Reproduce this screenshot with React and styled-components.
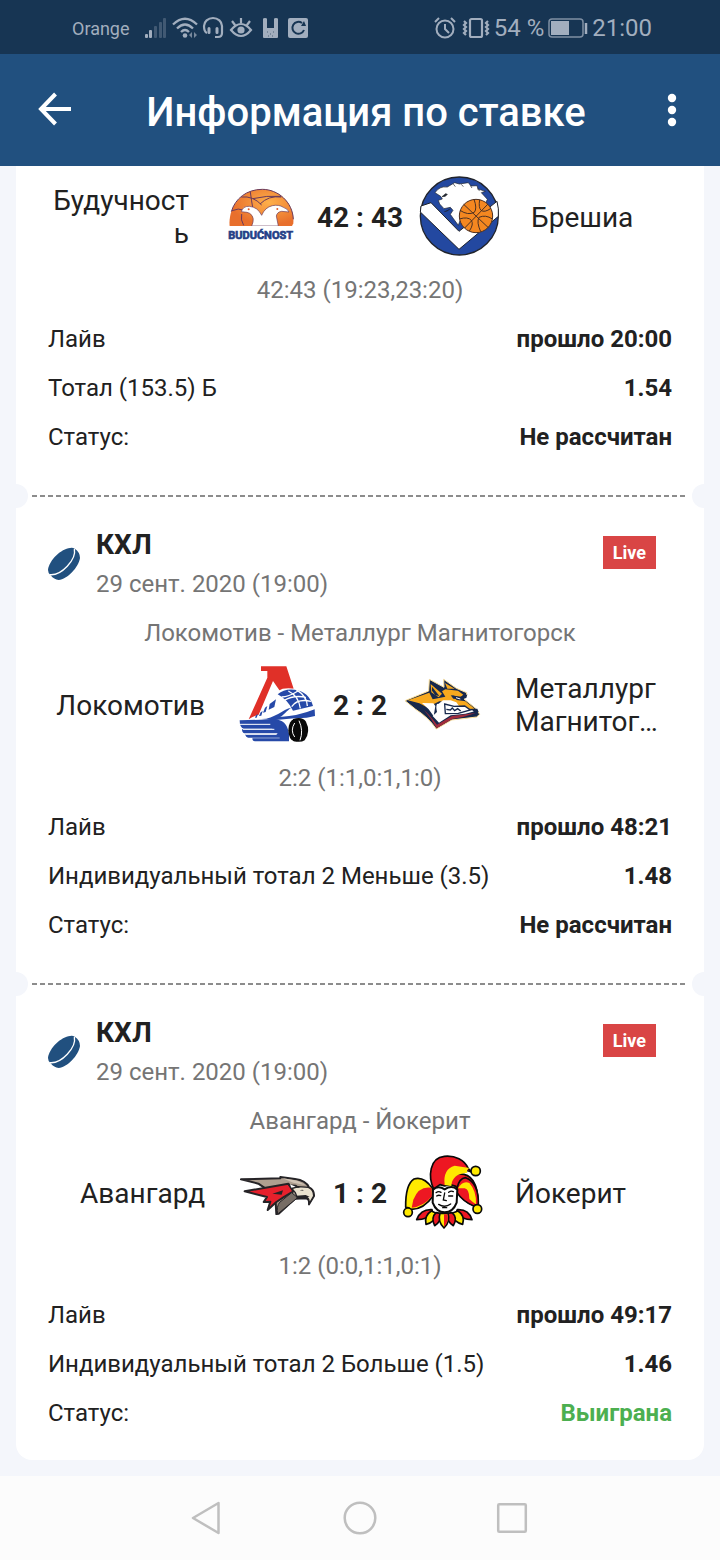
import React from "react";
import styled, { createGlobalStyle } from "styled-components";

const GlobalStyle = createGlobalStyle`
  * { box-sizing: border-box; }
  body {
    margin: 0;
    background: #f4f6fb;
    color: #212121;
    font-family: Roboto, "Noto Sans", sans-serif;
    font-size: 24px;
  }
  button { font: inherit; color: inherit; border: 0; padding: 0; background: none; cursor: pointer; }
  svg { display: block; flex: none; overflow: visible; }
`;

const Screen = styled.div`
  display: flex;
  flex-direction: column;
  min-height: 100vh;
`;

const StatusBar = styled.div`
  display: flex;
  justify-content: space-between;
  align-items: center;
  height: 54px;
  padding: 2px 68px 0 72px;
  background: #173553;
  color: #a2aebe;
`;

const StatusGroup = styled.div`
  display: flex;
  align-items: center;
  gap: ${(p) => p.$gap}px;
  white-space: pre;
`;

const Carrier = styled.span`
  font-size: 18px;
  margin-right: 10px;
`;

const AppBar = styled.header`
  display: flex;
  align-items: center;
  height: 112px;
  padding: 0 28px 0 32px;
  background: #21507f;
  color: #fff;
`;

const BarButton = styled.button`
  display: flex;
  justify-content: center;
  align-items: center;
  width: ${(p) => p.$width}px;
  height: 48px;
`;

const Title = styled.h1`
  flex: 1;
  margin: 0;
  padding-top: 6px;
  font-size: 40px;
  line-height: 48px;
  font-weight: 500;
  text-align: center;
`;

const Ticket = styled.main`
  flex: 1;
  margin: 0 16px 16px;
  background: #fff;
  border-radius: 0 0 16px 16px;
`;

const Bet = styled.section`
  padding: ${(p) => (p.$continued ? 3 : 0)}px 32px 23px;
`;

const Perforation = styled.div`
  display: flex;
  align-items: center;
  justify-content: space-between;
  gap: 4px;
  height: 24px;
`;

const Notch = styled.span`
  width: 12px;
  height: 24px;
  background: #f4f6fb;
  border-radius: ${(p) => (p.$right ? "12px 0 0 12px" : "0 12px 12px 0")};
`;

const Dashes = styled.span`
  flex: 1;
  height: 2px;
  background: repeating-linear-gradient(90deg, #8c8c8c 0 5px, transparent 5px 8px);
`;

const BetHeader = styled.div`
  display: flex;
  align-items: flex-start;
  gap: 16px;
  height: 100px;
  padding: 20px 16px 0 0;
`;

const SportIcon = styled.div`
  padding-top: 20px;
`;

const League = styled.div`
  flex: 1;
`;

const LeagueName = styled.h2`
  margin: 0;
  font-size: 28px;
  line-height: 34px;
  font-weight: 700;
`;

const MatchDate = styled.div`
  line-height: 44px;
  color: #757575;
`;

const LiveBadge = styled.span`
  margin-top: 8px;
  padding: 1px 10px 0;
  background: #d94545;
  color: #fff;
  font-size: 18px;
  line-height: 32px;
  font-weight: 700;
`;

const Caption = styled.div`
  padding-top: 2px;
  line-height: 47px;
  text-align: center;
  color: #757575;
`;

const Teams = styled.div`
  display: grid;
  grid-template-columns: minmax(0, 1fr) auto minmax(0, 1fr);
  align-items: center;
  gap: 32px;
  height: 96px;
`;

const TeamName = styled.div`
  display: -webkit-box;
  -webkit-box-orient: vertical;
  -webkit-line-clamp: 2;
  overflow: hidden;
  overflow-wrap: anywhere;
  font-size: 28px;
  line-height: 33px;
  text-align: ${(p) => (p.$home ? "right" : "left")};
`;

const ScoreBoard = styled.div`
  display: flex;
  align-items: center;
  gap: 16px;
`;

const Score = styled.strong`
  font-size: 28px;
  line-height: 33px;
  font-weight: 700;
`;

const Details = styled.dl`
  margin: 0;
`;

const Detail = styled.div`
  display: flex;
  justify-content: space-between;
  padding-top: 2px;
  line-height: 47px;
`;

const Term = styled.dt``;

const Value = styled.dd`
  margin: 0;
  font-weight: 700;
  color: ${(p) => (p.$won ? "#4caf50" : "inherit")};
`;

const NavBar = styled.nav`
  display: flex;
  justify-content: center;
  align-items: center;
  gap: 104px;
  height: 84px;
  background: #fcfcfc;
`;

const NavButton = styled.button`
  display: flex;
  justify-content: center;
  align-items: center;
  width: 48px;
  height: 48px;
`;

const SignalIcon = () => (
  <svg width="22" height="22" viewBox="0 0 22 22" fill="currentColor">
    <rect x="0" y="17" width="3" height="4" rx="1" />
    <rect x="4" y="13" width="3" height="8" rx="1" />
    <g opacity=".3">
      <rect x="9" y="9" width="3" height="12" rx="1" />
      <rect x="14" y="5" width="3" height="16" rx="1" />
      <rect x="18" y="1" width="3" height="20" rx="1" />
    </g>
  </svg>
);

const WifiIcon = () => (
  <svg width="26" height="22" viewBox="0 0 26 22" fill="none" stroke="currentColor" strokeWidth="2.3">
    <path d="M1 7.5Q13-4 25 7.5M5 11.5q8-8 16 0M9 15q4-4 8 0" />
    <circle cx="13" cy="18.5" r="2.3" fill="currentColor" stroke="none" />
    <path d="M20 15v6l-3-3zM22 15v6l3-3z" fill="currentColor" stroke="none" opacity=".7" />
  </svg>
);

const HeadsetIcon = () => (
  <svg width="22" height="22" viewBox="0 0 22 22" fill="none" stroke="currentColor" strokeWidth="2.2">
    <path d="M4 16C1 15 1 12 1 9a9 8 0 0 1 18 0v7q0 4-4 4h-3" />
    <path d="M6 11.500v4M14 11.500v4" strokeWidth="3" strokeLinecap="round" />
  </svg>
);

const EyeIcon = () => (
  <svg width="28" height="22" viewBox="0 0 28 22" fill="none" stroke="currentColor" strokeWidth="2.200">
    <path d="M1 13Q11 1 21 13 11 25 1 13zM11 1v5M2 4l3 4M20 4l-3 4" />
    <circle cx="11" cy="13" r="3.600" fill="currentColor" stroke="none" />
  </svg>
);

const BunnyIcon = () => (
  <svg width="20" height="22" viewBox="0 0 20 22">
    <path d="M0 2q0-1 2-1t2 1v9h7V2q0-1 2-1t2 1v18q0 1-1 1H1q-1 0-1-1z" fill="currentColor" />
    <path d="M4 15h1M10 15h1M7 17h1M5 19h1M9 19h1" stroke="#4d6279" strokeWidth="1" />
  </svg>
);

const SyncIcon = () => (
  <svg width="20" height="22" viewBox="0 0 20 22" fill="none" stroke="#173553" strokeWidth="2">
    <rect y="1" width="20" height="20" rx="2" fill="currentColor" stroke="none" />
    <path d="M16 13a6 6 0 1 1-2-7" />
    <path d="M13 9l5 0-2-5z" fill="#173553" stroke="none" />
  </svg>
);

const AlarmIcon = () => (
  <svg width="24" height="22" viewBox="0 0 24 22" fill="none" stroke="currentColor" strokeWidth="2">
    <circle cx="11" cy="12" r="8.500" />
    <path d="M11 7v5l4 4M1 5l4-4M21 5l-4-4" />
  </svg>
);

const VibrateIcon = () => (
  <svg width="28" height="22" viewBox="0 0 28 22" fill="none" stroke="currentColor" strokeWidth="2.200">
    <rect x="8" y="2" width="12" height="18" rx="1.500" />
    <path d="M2 4l2 2-2 2 2 2-2 2 2 2-2 2 2 2M26 4l-2 2 2 2-2 2 2 2-2 2 2 2-2 2" />
  </svg>
);

const BatteryIcon = () => (
  <svg width="40" height="20" viewBox="0 0 40 20" fill="none" stroke="currentColor">
    <rect x="1" y="1" width="34" height="18" rx="3" opacity=".75" strokeWidth="1.500" />
    <rect x="3" y="3" width="18" height="14" fill="currentColor" stroke="none" />
    <path d="M38 5v11" strokeWidth="2.500" />
  </svg>
);

const BackIcon = () => (
  <svg width="34" height="34" viewBox="1 1 34 34" fill="none" stroke="#fff" strokeWidth="4">
    <path d="M17.500 2L3 17l14.500 15M3.500 17H33" />
  </svg>
);

const MoreIcon = () => (
  <svg width="10" height="34" viewBox="0 0 10 34" fill="#fff">
    <circle cx="5" cy="5" r="4.200" />
    <circle cx="5" cy="17" r="4.200" />
    <circle cx="5" cy="29" r="4.200" />
  </svg>
);

const PuckIcon = () => (
  <svg width="32" height="32" viewBox="0 0 96 96" role="img" aria-label="Хоккей">
    <path d="M80 2Q96 12 96 30C92 58 58 94 32 96Q18 95 8 82Q0 76 0 66C4 36 40 2 66 0Q74-2 80 2z" fill="#21507f" />
    <path d="M79 3C86 34 40 84 5 80" fill="none" stroke="#fff" strokeWidth="4" />
  </svg>
);

const BuducnostLogo = () => (
  <svg width="80" height="80" viewBox="18 21 240 240" role="img" aria-label="Будучност">
    <defs>
      <radialGradient id="ballGlow" cx=".62" cy=".35" r=".6">
        <stop offset="0" stopColor="#ffb04a" />
        <stop offset="1" stopColor="#e86f2c" />
      </radialGradient>
    </defs>
    <path d="M44 170C38 110 82 57 142 58C198 59 239 105 235 160L230 170z" fill="url(#ballGlow)" />
    <g fill="none" stroke="#69395b" strokeWidth="3">
      <path d="M49 125C60 86 95 58 142 58s91 38 93 90" />
      <path d="M79 81q35-4 61 24M106 66q4 30 7 46M113 86q42-10 85-7M135 102q26-26 64-21M51 122q19-9 37-1M80 132q-4 18 6 34" />
    </g>
    <path d="M79 125Q84 108 103 109Q128 111 140 136Q150 112 172 107Q192 103 205 112Q218 116 222 126L200 124Q186 126 184 138L190 168H110Q122 142 104 130L96 127z" fill="#fff" stroke="#69395b" strokeWidth="2" />
    <circle cx="101" cy="118" r="3" fill="#e15a28" />
    <circle cx="187" cy="117" r="3" fill="#e15a28" />
    <rect x="38" y="168" width="198" height="44" fill="#fff" />
    <text x="137" y="207" textAnchor="middle" fontFamily="'Liberation Sans Narrow', Roboto, sans-serif" fontSize="33" fontWeight="700" fill="#243f87" stroke="#243f87" strokeWidth="2">BUDUĆNOST</text>
  </svg>
);

const BresciaLogo = () => (
  <svg width="80" height="80" viewBox="27 21 240 240" role="img" aria-label="Брешиа">
    <circle cx="148" cy="138" r="117" fill="#2348a0" stroke="#20232b" strokeWidth="4" />
    <path d="M33 108l30-10 84 86 114-90q6 22 4 45L147 238 31 126z" fill="#fff" stroke="#20232b" strokeWidth="3" />
    <path d="M75 68q13-20 37-17l22-13 14 4 27-4 8 10 18-1 3 10 22 7-12 4 18 20-8 18-60 20-4 36-10-10-5 14-14-19-10-14 8-12-8-9-19 4-13-14-4-11 12-4-5-8z" fill="#fff" stroke="#20232b" strokeWidth="2" />
    <path d="M96 80l11-9 5 2-6 6zM130 42l6 8M154 43l6 7M181 47l5 7M202 57l7 5M121 116q-8 8-18 9" fill="#20232b" stroke="#20232b" strokeWidth="2" />
    <circle cx="198" cy="138" r="50" fill="#f48720" stroke="#4b3023" strokeWidth="3" />
    <path d="M161 103l74 70M164 174l70-72M150 121q24 16 43 6 9-12-1-39M247 147q-20-14-40-5-8 14 5 43M148 147q26-8 36 4 8 12-6 32M209 89q-4 24 4 32 10 8 30-6" fill="none" stroke="#4b3023" strokeWidth="3" />
  </svg>
);

const LokomotivLogo = () => (
  <svg width="80" height="80" viewBox="20 30 240 240" role="img" aria-label="Локомотив">
    <path d="M92 34h76l22 67-37 13-25-36-43 101q-18 4-30 14l56-125V48H92z" fill="#e03028" />
    <path d="M82 190l17-36q20-39 58-53 51-7 76 25 20 26 21 57l-51 5-64 5z" fill="#fff" />
    <path d="M142 118q20-18 51-14 43 6 55 49l-60 14q-17-34-46-49z" fill="#2649a8" />
    <g fill="none" stroke="#fff" strokeWidth="4">
      <path d="M154 126q20 0 49-18M160 137q30-18 67-10M184 155q17-25 58-16M174 108q31 15 36 52M198 104q32 20 33 49" />
    </g>
    <g fill="#2649a8">
      <path d="M118 147l19-14-5 23-17 8zM104 158l7-5-5 18-8 2zM91 172l6-4-4 14-7 1zM77 181l6-4-4 11h-5z" />
      <path d="M94 192c38 0 64-30 89-34-13 8-25 24-34 28q55-3 104-23l1 20q-26 8-61 7l-65 6z" />
      <path d="M28 196l99-3q42-2 49 43v23H74q-8 0-8-9h82v-2H54q-9-1-9-11h96v-2H43q-8-1-8-12h91v-2H40q-12-2-12-25z" />
      <path d="M28 208h92M38 223h94M45 238h94" stroke="#fff" strokeWidth="3" />
    </g>
    <path d="M188 192q28-9 39 8 15 29-4 56-12 8-35 2z" fill="#090909" />
    <path d="M206 197q14 30 3 59" fill="none" stroke="#fff" strokeWidth="3" />
    <ellipse cx="192" cy="226" rx="18" ry="33" fill="#090909" />
    <path d="M193 204q-14 22 0 42" fill="none" stroke="#fff" strokeWidth="3" />
  </svg>
);

const MetallurgLogo = () => (
  <svg width="80" height="80" viewBox="25 15 240 240" role="img" aria-label="Металлург Магнитогорск">
    <path d="M31 122l71-29 2-35 44 24-1-24 38 27 31 13 0 10-8 9 35 28 12 18-9 8-75 9-46 27q-24-35-62-59z" fill="#17284c" stroke="#ffe29a" strokeWidth="3" strokeLinejoin="round" />
    <path d="M88 150q16 14 39 44l45-26 71-9-38 12-32 6-47 28q-14-28-38-55z" fill="#a12c3c" />
    <path d="M40 121L104 98L114 118L152 110L142 94L152 88L190 92L206 104L196 112L172 106L186 120L212 124L240 146L204 147L176 127L134 124L118 132L112 150L74 130z" fill="#f7a91e" />
    <path d="M108 72L142 101L132 112L110 97zM151 69L180 86L158 86z" fill="#f7a91e" />
    <path d="M112 80l22 28-12-2-10-14z" fill="#17284c" />
    <path d="M82 129l34 1 6 8-5 31-15-21zM132 131l13-10 23 0 17 6 12 16 46 10-31 8-44 5-35 22-19-20 13-12q-4-16 0-24z" fill="#fff" />
    <path d="M150 132l28 7 32-1 17 12-36 10-39 1zM155 148l12 2 6-6 7 8 9-6 9 7" fill="#fff" stroke="#17284c" strokeWidth="4" />
    <path d="M168 106l36 5 14-8-3 11-14 4-25-2zM231 147l17-1 4 10-12 3z" fill="#17284c" />
    <path d="M184 113l13 4" stroke="#fff" strokeWidth="3" />
  </svg>
);

const AvangardLogo = () => (
  <svg width="80" height="80" viewBox="20 9 240 240" role="img" aria-label="Авангард">
    <g stroke="#252326" strokeLinejoin="round">
      <path d="M32 88l118-3v-4l44 6q32 4 42 25 16 7 15 26l-15 25q2-16-9-18l-33 1-49 45-7 1-2-34-12-30-40-27z" fill="#ae9f90" strokeWidth="6" />
      <path d="M43 124l131-23 15 23-30 18-21 14-26 24 8-25-20 1 10-15z" fill="#e6202c" strokeWidth="6" />
      <path d="M142 192q-4-23 6-35l36-29 18 15z" fill="#776d65" strokeWidth="3" />
      <path d="M180 110l15 18 6 15 28-1q9 2 7 20l14-24q0-20-16-26l-30-2-17 5z" fill="#eae2cf" strokeWidth="4" />
    </g>
    <path d="M170 103l27 1 12 9-25 1zM126 131l32-10-4 13zM208 121l8-2 5 3zM198 137l28-2 12 5-36 5z" fill="#252326" />
    <path d="M179 103l17 7-13 3z" fill="#fff" />
    <path d="M155 84l46 8 25 14-37-8z" fill="#d0c3b5" />
  </svg>
);

const JokeritLogo = () => (
  <svg width="80" height="80" viewBox="25 22 240 240" role="img" aria-label="Йокерит">
    <g stroke="#090909" strokeWidth="5" strokeLinejoin="round">
      <path d="M112 192Q78 190 66 222Q98 222 114 202zM188 192Q222 190 232 222Q202 222 184 202z" fill="#ed1722" />
      <path d="M110 196Q88 210 94 236Q120 230 128 204zM190 196Q212 210 204 236Q178 230 168 204z" fill="#ffe900" />
      <path d="M124 201Q108 216 120 240Q138 230 142 204zM172 201Q190 216 176 240Q158 230 154 204z" fill="#ed1722" />
      <path d="M136 203Q128 228 148 247Q168 228 160 203z" fill="#ffe900" />
      <path d="M113 128q-25-37-55-28-26 16-25 85 10 0 16 6 38 1 66-40z" fill="#ffe900" />
      <path d="M117 130c-17-36-13-94 32-98 32-3 61 10 72 37l10 10q-36-13-63 12l23-6c38-3 60 27 59 92l-14 2q-31-12-49-43l-3-14-18-5-16 4-14-4z" fill="#ed1722" />
      <path d="M187 128q6-30 26-32 40 15 38 81-8 0-14 4-34-15-50-40z" fill="#ed1722" />
      <circle cx="40" cy="200" r="13" fill="#ffe900" />
      <circle cx="243" cy="76" r="14" fill="#ffe900" />
      <circle cx="248" cy="190" r="13" fill="#ffe900" />
    </g>
    <path d="M110 126q-38-6-54 36l-5 24q34-2 61-34z" fill="#ed1722" />
    <path d="M150 118q-6-48 30-58l44 7q-10 6-6 14-46 3-48 40z" fill="#ffe900" />
    <path d="M190 128q14-24 34-16 22 24 20 64-12-8-20-16 0-30-14-32z" fill="#ffe900" />
    <path d="M148 206v38q16-18 10-38z" fill="#ed1722" />
    <path d="M115 132q15-14 35-1 22-14 38 1l-2 39q-11 29-36 29t-36-29z" fill="#fff" stroke="#090909" strokeWidth="6" />
    <g fill="none" stroke="#090909" strokeWidth="4" strokeLinecap="round">
      <path d="M124 141q8-6 15-1M162 140q8-6 14-2M126 151q6-4 12-1M162 151h12M150 142l-4 21 9 2M132 176q18 12 36-1M144 186h12" />
    </g>
  </svg>
);

const bets = [
  {
    id: "buducnost",
    continued: true,
    home: "Будучность",
    away: "Брешиа",
    HomeLogo: BuducnostLogo,
    AwayLogo: BresciaLogo,
    score: "42 : 43",
    periods: "42:43 (19:23,23:20)",
    elapsed: "прошло 20:00",
    market: "Тотал (153.5) Б",
    odds: "1.54",
    status: "Не рассчитан",
  },
  {
    id: "lokomotiv",
    match: "Локомотив - Металлург Магнитогорск",
    home: "Локомотив",
    away: "Металлург Магнитогорск",
    HomeLogo: LokomotivLogo,
    AwayLogo: MetallurgLogo,
    score: "2 : 2",
    periods: "2:2 (1:1,0:1,1:0)",
    elapsed: "прошло 48:21",
    market: "Индивидуальный тотал 2 Меньше (3.5)",
    odds: "1.48",
    status: "Не рассчитан",
  },
  {
    id: "avangard",
    match: "Авангард - Йокерит",
    home: "Авангард",
    away: "Йокерит",
    HomeLogo: AvangardLogo,
    AwayLogo: JokeritLogo,
    score: "1 : 2",
    periods: "1:2 (0:0,1:1,0:1)",
    elapsed: "прошло 49:17",
    market: "Индивидуальный тотал 2 Больше (1.5)",
    odds: "1.46",
    status: "Выиграна",
    won: true,
  },
];

function DetailRow({ label, value, won }) {
  return (
    <Detail>
      <Term>{label}</Term>
      <Value $won={won}>{value}</Value>
    </Detail>
  );
}

function BetCard({ bet }) {
  const { HomeLogo, AwayLogo } = bet;
  return (
    <Bet $continued={bet.continued}>
      {!bet.continued && (
        <>
          <BetHeader>
            <SportIcon><PuckIcon /></SportIcon>
            <League>
              <LeagueName>КХЛ</LeagueName>
              <MatchDate>29 сент. 2020 (19:00)</MatchDate>
            </League>
            <LiveBadge>Live</LiveBadge>
          </BetHeader>
          <Caption>{bet.match}</Caption>
        </>
      )}
      <Teams>
        <TeamName $home>{bet.home}</TeamName>
        <ScoreBoard>
          <HomeLogo />
          <Score>{bet.score}</Score>
          <AwayLogo />
        </ScoreBoard>
        <TeamName>{bet.away}</TeamName>
      </Teams>
      <Caption>{bet.periods}</Caption>
      <Details>
        <DetailRow label="Лайв" value={bet.elapsed} />
        <DetailRow label={bet.market} value={bet.odds} />
        <DetailRow label="Статус:" value={bet.status} won={bet.won} />
      </Details>
    </Bet>
  );
}

export default function App() {
  return (
    <Screen>
      <GlobalStyle />
      <StatusBar>
        <StatusGroup $gap={5}>
          <Carrier>Orange</Carrier>
          <SignalIcon />
          <WifiIcon />
          <HeadsetIcon />
          <EyeIcon />
          <BunnyIcon />
          <SyncIcon />
        </StatusGroup>
        <StatusGroup $gap={4}>
          <AlarmIcon />
          <VibrateIcon />
          <span>54 %</span>
          <BatteryIcon />
          <span>21:00</span>
        </StatusGroup>
      </StatusBar>
      <AppBar>
        <BarButton $width={48} aria-label="Назад"><BackIcon /></BarButton>
        <Title>Информация по ставке</Title>
        <BarButton $width={40} aria-label="Меню"><MoreIcon /></BarButton>
      </AppBar>
      <Ticket>
        {bets.map((bet, i) => (
          <React.Fragment key={bet.id}>
            {i > 0 && (
              <Perforation>
                <Notch />
                <Dashes />
                <Notch $right />
              </Perforation>
            )}
            <BetCard bet={bet} />
          </React.Fragment>
        ))}
      </Ticket>
      <NavBar>
        <NavButton aria-label="Назад">
          <svg width="34" height="34" viewBox="0 0 34 34" fill="none" stroke="#bfbfbf" strokeWidth="2.500" strokeLinejoin="round">
            <path d="M2 17L27.500 2v30z" />
          </svg>
        </NavButton>
        <NavButton aria-label="Домой">
          <svg width="34" height="34" viewBox="0 0 34 34" fill="none" stroke="#bfbfbf" strokeWidth="2.500">
            <circle cx="17" cy="17" r="15.300" />
          </svg>
        </NavButton>
        <NavButton aria-label="Недавние">
          <svg width="34" height="34" viewBox="0 0 34 34" fill="none" stroke="#bfbfbf" strokeWidth="2.500">
            <rect x="3.200" y="3.200" width="27.600" height="27.600" rx="1" />
          </svg>
        </NavButton>
      </NavBar>
    </Screen>
  );
}
